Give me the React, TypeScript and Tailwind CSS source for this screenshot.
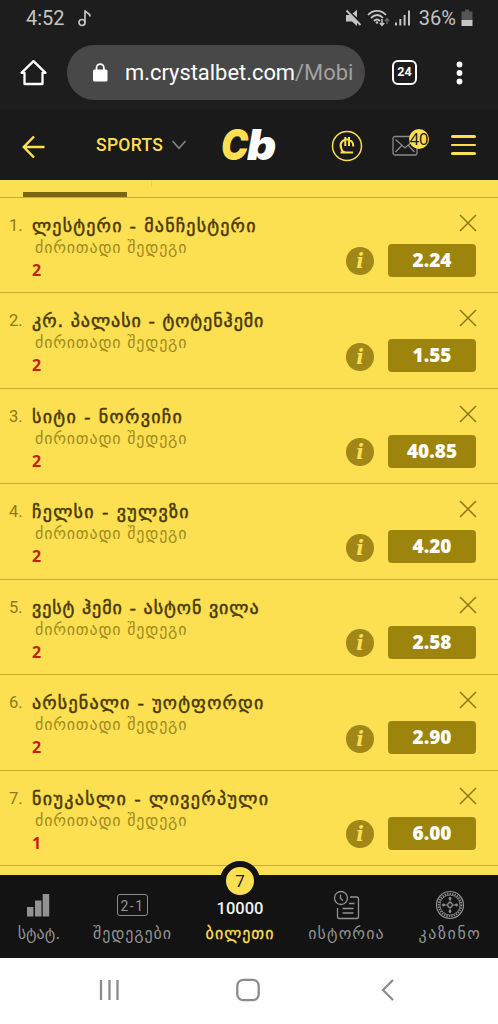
import { clsx } from 'clsx'

const bets = [
  { teams: 'ლესტერი - მანჩესტერი', pick: '2', odd: '2.24', fit: 'tracking-[1.2px]' },
  { teams: 'კრ. პალასი - ტოტენჰემი', pick: '2', odd: '1.55', fit: 'tracking-[0.95px]' },
  { teams: 'სიტი - ნორვიჩი', pick: '2', odd: '40.85', fit: 'tracking-[1.3px]' },
  { teams: 'ჩელსი - ვულვზი', pick: '2', odd: '4.20', fit: 'tracking-[1.3px]' },
  { teams: 'ვესტ ჰემი - ასტონ ვილა', pick: '2', odd: '2.58', fit: 'tracking-[0.95px]' },
  { teams: 'არსენალი - უოტფორდი', pick: '2', odd: '2.90', fit: 'tracking-[1.2px]' },
  { teams: 'ნიუკასლი - ლივერპული', pick: '1', odd: '6.00', fit: 'tracking-[1.35px]' },
]

function StatusBar() {
  return (
    <div className="flex h-9 items-center pl-[26px] pr-[25px] pb-px font-['Roboto',sans-serif] text-[20px] text-[#c4c4c4]">
      <span className="leading-9">4:52</span>
      <svg className="ml-[13px]" width="14" height="18" viewBox="0 0 14 18" fill="none" stroke="currentColor" strokeWidth="1.7">
        <circle cx="4" cy="13.5" r="3" />
        <path d="M7 13.5V1.2C7 4 12.5 3.5 12 7.5" />
      </svg>
      <div className="ml-auto flex items-center">
        <svg width="17" height="18" viewBox="0 0 17 18" fill="currentColor">
          <path d="M1 6h5l6 6v5l-5-4.5H1zM7.5 4.5L12 0.8V8.5z" />
          <path d="M1.5 1.5L15.5 16" stroke="currentColor" strokeWidth="1.8" />
        </svg>
        <svg className="ml-[5px]" width="23" height="18" viewBox="0 0 23 18" fill="none" stroke="currentColor" strokeWidth="1.8">
          <path d="M1 6C6 0.5 14 0.5 19 6M4 9C8 5 12.500 5 16 9M7 12C9 10 11 10 13 12" />
          <circle cx="10" cy="13.5" r="1.3" fill="currentColor" stroke="none" />
          <path d="M15 10v6M12.8 14l2.2 2.3L17.200 14" strokeWidth="1.5" />
          <path d="M20 15V10M18 12l2-2.3L22 12" stroke="#666" strokeWidth="1.5" />
        </svg>
        <svg className="ml-[5px]" width="16" height="18" viewBox="0 0 16 18" fill="currentColor">
          <rect y="13.5" width="2" height="3" />
          <rect x="4.3" y="10" width="2" height="6.5" />
          <rect x="8.6" y="6" width="2" height="10.5" />
          <rect x="13" y="1.5" width="2" height="15" />
        </svg>
        <span className="ml-[8px] leading-9">36%</span>
        <svg className="ml-[5px]" width="12" height="18" viewBox="0 0 12 18">
          <path d="M4 0.5h4v2h3.5V12H0.500V2.5H4z" fill="#555" />
          <path d="M0.5 11h11v6h-11z" fill="#c4c4c4" />
        </svg>
      </div>
    </div>
  )
}

function AddressBar() {
  return (
    <div className="flex h-[74px] items-center pl-[20px] pr-[35px] pb-px font-['Roboto',sans-serif]">
      <svg width="27" height="28" viewBox="0 0 27 28" fill="none" stroke="#fff" strokeWidth="2.3" strokeLinejoin="round">
        <path d="M1.5 13.8L13.5 2.2L25.5 13.8H22.5V25H4.5V13.8Z" />
      </svg>
      <div className="ml-[20px] flex h-[55px] w-[298px] items-center rounded-full bg-[#484848] pl-[26px]">
        <svg width="15" height="19" viewBox="0 0 15 19">
          <rect y="6.500" width="14.500" height="12" rx="1.500" fill="#fff" />
          <path d="M3.500 7V4.800a3.700 3.700 0 0 1 7.400 0V7" fill="none" stroke="#fff" strokeWidth="1.700" />
        </svg>
        <div className="ml-[17px] whitespace-nowrap text-[21.9px] leading-[30px] text-white">
          m.crystalbet.com<span className="text-[#a2a2a2]">/Mobi</span>
        </div>
      </div>
      <div className="ml-[27px] flex size-[25px] items-center justify-center rounded-[6px] border-[2.5px] border-white text-[12.500px] font-bold text-white">
        24
      </div>
      <svg className="ml-auto" width="7" height="24" viewBox="0 0 7 24" fill="#fff">
        <circle cx="3.5" cy="3.500" r="2.900" />
        <circle cx="3.5" cy="12" r="2.900" />
        <circle cx="3.5" cy="20.500" r="2.900" />
      </svg>
    </div>
  )
}

function SiteHeader() {
  return (
    <header className="flex h-[70px] items-center bg-[#1a1a1a] pl-[22px] pr-[22px] pt-[3px]">
      <svg width="24" height="24" viewBox="0 0 24 24" fill="none" stroke="#fddf52" strokeWidth="2.5">
        <path d="M22.500 12H2M12 1.500L1.800 12L12 22.500" />
      </svg>
      <span className="ml-[50px] -mt-[3px] w-[68px] font-['Roboto',sans-serif] text-[17.5px] font-medium tracking-[0.3px] text-[#fddf52]">SPORTS</span>
      <svg className="ml-[7px] -mt-[3px]" width="16" height="10" viewBox="0 0 16 10" fill="none" stroke="#84828b" strokeWidth="1.6">
        <path d="M1.500 1L8 8.300L14.500 1" />
      </svg>
      <div className="ml-[34px] -mt-[4px] flex w-[57px] font-['Inter',sans-serif] text-[42px] font-black italic leading-[42px]">
        <span className="w-[26px] origin-left scale-x-[0.87] text-[#fddf52]">C</span>
        <span className="origin-left scale-x-[1.08] text-white">b</span>
      </div>
      <svg className="ml-[53px] -mt-px" width="32" height="32" viewBox="0 0 32 32" fill="none" stroke="#fddf52">
        <circle cx="16" cy="16" r="14.5" strokeWidth="1.5" />
        <path d="M9.8 17.5C8.500 11.500 13 9.500 16 9.500C19.500 9.500 22.500 11.500 22.300 16.500M10 16C10 20 11.500 22.300 14.500 22.300M9.500 22.500H22M14.300 7v9M18 7v9" strokeWidth="2" />
      </svg>
      <div className="relative ml-[29px] -mt-px h-[22px] w-[27px]">
        <svg width="27" height="22" viewBox="0 0 27 22" fill="none" stroke="#8b8986" strokeWidth="1.3">
          <rect x="1" y="1.500" width="24" height="18.500" rx="2" />
          <path d="M3.500 4.500L13 13L22.500 4.500M3.500 17L9.800 10.500M16.500 10.500L22.500 17" />
        </svg>
        <span className="absolute -top-[6px] left-[17px] flex size-[20px] items-center justify-center rounded-full bg-[#fddf52] font-['Noto_Sans',sans-serif] text-[16.5px] leading-none tracking-[-0.3px] text-[#1a1a1a]">
          40
        </span>
      </div>
      <div className="-mt-[3px] ml-auto flex w-[25px] flex-col gap-[6px]">
        <i className="h-[2.5px] rounded-full bg-[#fddf52]" />
        <i className="h-[2.5px] rounded-full bg-[#fddf52]" />
        <i className="h-[2.5px] rounded-full bg-[#fddf52]" />
      </div>
    </header>
  )
}

function BetRow({ bet, index }: { bet: (typeof bets)[number]; index: number }) {
  return (
    <li className="flex h-[95.5px] border-b border-[#c6aa32] pl-[9px] pr-[22px]">
      <span className="w-[23px] pt-[17px] font-['Roboto',sans-serif] text-[16.5px] leading-[22px] text-[#8d7918]">{index}.</span>
      <div className="flex flex-col pt-[17px] font-['DejaVu_Sans',sans-serif]">
        <span className={clsx('h-[22px] whitespace-nowrap text-[18px] leading-[22px] text-[#4a3908] [-webkit-text-stroke:0.5px]', bet.fit)}>
          {bet.teams}
        </span>
        <span className="ml-[3px] h-[22px] whitespace-nowrap text-[16px] leading-[22px] tracking-[0.8px] text-[#a08a20]">ძირითადი შედეგი</span>
        <span className="h-[22px] font-['Open_Sans',sans-serif] text-[16px] font-bold leading-[22px] text-[#c91c10]">{bet.pick}</span>
      </div>
      <div className="ml-auto flex flex-col items-end pt-[16px]">
        <svg className="-mr-px" width="18" height="18" viewBox="0 0 18 18" fill="none" stroke="#8d7710" strokeWidth="1.5">
          <path d="M1 1L17 17M17 1L1 17" />
        </svg>
        <div className="mt-[12px] flex items-center gap-[14px]">
          <span className="mt-[2px] flex size-[28px] items-center justify-center rounded-full bg-[#a08717] font-['DejaVu_Serif',serif] text-[20px] font-bold italic leading-none text-[#fddf52]">
            i
          </span>
          <span className="flex h-[33px] w-[88px] items-center justify-center rounded-[4px] bg-[#9d840d] font-['Open_Sans',sans-serif] text-[19px] font-extrabold leading-none text-white">
            {bet.odd}
          </span>
        </div>
      </div>
    </li>
  )
}

function BottomNav() {
  return (
    <nav className="grid h-[83px] grid-cols-[78px_109px_106px_107px_98px] bg-[#131313] font-['DejaVu_Sans',sans-serif] text-[16px] leading-[20px] text-[#929292]">
      <div className="flex flex-col items-center pt-[18px]">
        <svg width="24" height="24" viewBox="0 0 24 24" fill="currentColor">
          <path d="M0 14h6.5v9.500H0zM8 7.500h6.500v16H8zM15.700 1h6.500v22.500h-6.500z" />
        </svg>
        <span className="mt-[7px] whitespace-nowrap">სტატ.</span>
      </div>
      <div className="flex flex-col items-center pt-[19px]">
        <div className="flex h-[22px] w-[31px] items-center justify-center rounded-[3px] border border-[#8b8b8b] pt-px font-['Roboto',sans-serif] text-[14px] tracking-[1.5px]">
          2-1
        </div>
        <span className="mt-[8px] whitespace-nowrap tracking-[0.9px]">შედეგები</span>
      </div>
      <div className="relative flex flex-col items-center pt-[24px]">
        <div className="absolute -top-[14px] left-[33px] flex size-[40px] items-center justify-center rounded-full border-[6px] border-[#131313] bg-[#fddf52] font-['Roboto',sans-serif] text-[17px] text-[#1a1a1a]">
          7
        </div>
        <span className="font-['Roboto',sans-serif] text-[16.5px] font-medium text-[#f2f2f2]">10000</span>
        <span className="mt-[5px] whitespace-nowrap tracking-[1px] text-[#fddf52] [-webkit-text-stroke:0.3px]">ბილეთი</span>
      </div>
      <div className="flex flex-col items-center pt-[15px]">
        <svg width="28" height="30" viewBox="0 0 28 30" fill="none" stroke="currentColor" strokeWidth="1.3">
          <circle cx="8" cy="8" r="6.5" />
          <path d="M7.500 4.500V8.500L10 10.500M17 7H23.500Q25.500 7 25.500 9V26.500Q25.500 28.500 23.500 28.500H6.500Q4.500 28.500 4.500 26.500V18M16 13.500H21.500M9.500 18.500H20.500M9.500 23H20.500" />
        </svg>
        <span className="mt-[4px] whitespace-nowrap tracking-[1.1px]">ისტორია</span>
      </div>
      <div className="flex flex-col items-center pt-[15px]">
        <svg className="ml-[2px]" width="30" height="30" viewBox="0 0 30 30" fill="none" stroke="currentColor">
          <circle cx="15" cy="15" r="13.5" strokeWidth="1.200" />
          <circle cx="15" cy="15" r="11.3" strokeWidth="2" strokeDasharray="1.3 1.2" />
          <circle cx="15" cy="15" r="10" strokeWidth="0.8" />
          <circle cx="15" cy="15" r="2.3" strokeWidth="1.2" />
          <path d="M15 8.500v4M15 17.500v4M8.500 15h4M17.500 15h4" />
          <path d="M15 8.500h.01M15 21.500h.01M8.500 15h.01M21.500 15h.01" strokeWidth="2.8" strokeLinecap="round" />
        </svg>
        <span className="ml-[2px] mt-[4px] whitespace-nowrap tracking-[1.6px]">კაზინო</span>
      </div>
    </nav>
  )
}

function SystemNav() {
  return (
    <div className="flex h-[66px] items-center bg-[#fefefe] pl-[98px] pb-[3px] text-[#8c8c8c]">
      <svg width="23" height="24" viewBox="0 0 23 24" fill="none" stroke="currentColor" strokeWidth="2.3">
        <path d="M3 2v20M11.500 2v20M19.500 2v20" />
      </svg>
      <svg className="ml-[115px]" width="24" height="24" viewBox="0 0 24 24" fill="none" stroke="currentColor" strokeWidth="2.3">
        <rect x="1.300" y="1.800" width="21.400" height="20.400" rx="6" />
      </svg>
      <svg className="ml-[121px]" width="14" height="24" viewBox="0 0 14 24" fill="none" stroke="currentColor" strokeWidth="2.3">
        <path d="M12 2L2 12L12 22" />
      </svg>
    </div>
  )
}

export default function App() {
  return (
    <div className="flex h-[1024px] w-[498px] flex-col overflow-hidden bg-[#1d1d1d]">
      <StatusBar />
      <AddressBar />
      <SiteHeader />
      <main className="h-[695px] bg-[#fddf52]">
        <div className="flex h-[17.5px] items-end border-b border-[#c6aa32]">
          <div className="ml-[23px] h-[5px] w-[104px] bg-[#7a6611]" />
          <div className="mb-[10px] ml-[24px] h-[7px] w-px bg-[#edd04b]" />
        </div>
        <ul>
          {bets.map((bet, i) => (
            <BetRow key={bet.teams} bet={bet} index={i + 1} />
          ))}
        </ul>
      </main>
      <BottomNav />
      <SystemNav />
    </div>
  )
}
